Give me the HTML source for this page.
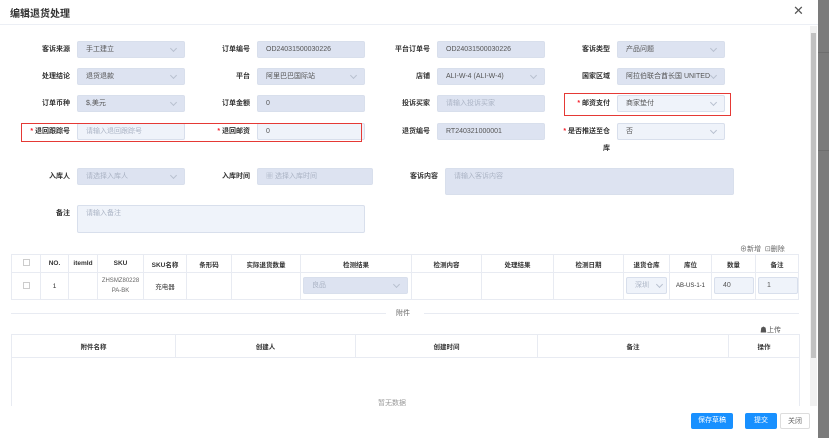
<!DOCTYPE html>
<html><head><meta charset="utf-8"><style>
*{box-sizing:border-box;margin:0;padding:0}
body{width:829px;height:438px;overflow:hidden;background:#fff;font-family:"Liberation Sans","Noto Sans CJK SC",sans-serif;font-size:7px;color:#333;position:relative}
.a{position:absolute}
.lb{position:absolute;text-align:right;font-weight:bold;color:#333;font-size:7px;line-height:17px}
.in{position:absolute;height:17px;border-radius:2px;background:#dde3f1;border:1px solid #d8dfec;font-size:7px;line-height:15px;padding-left:8px;color:#555}
.in.e{background:#eff3fa}
.ph{color:#aab3c4}
.ar{position:absolute;right:8px;top:4px;width:5px;height:5px;border-right:1px solid #b8c0cf;border-bottom:1px solid #b8c0cf;transform:rotate(45deg)}
.st{color:#f5222d}
table{border-collapse:collapse;position:absolute;font-size:6.5px}
td{border:1px solid #e8ebf2;text-align:center;color:#333}
.red{position:absolute;border:1px solid #e53935}
.btn{position:absolute;height:16px;font-size:7px;line-height:16px;text-align:center;border-radius:2px}
</style></head><body>
<div class="a" style="left:0;top:0;width:818px;height:438px;background:#fff"></div>
<div class="a" style="left:818px;top:0;width:11px;height:438px;background:#7b7b7b"></div>
<div class="a" style="left:818px;top:52px;width:11px;height:1px;background:#6e6e6e"></div>
<div class="a" style="left:818px;top:150px;width:11px;height:1px;background:#6e6e6e"></div>
<div class="a" style="left:10px;top:5px;font-size:10px;font-weight:bold;color:#333">编辑退货处理</div>
<div class="a" style="left:793px;top:3px;font-size:13px;color:#555">✕</div>
<div class="a" style="left:0;top:24px;width:818px;height:1px;background:#eceff5"></div>
<div class="a" style="left:810px;top:26px;width:7px;height:380px;background:#f1f1f1"></div>
<div class="a" style="left:811px;top:33px;width:5px;height:325px;background:#c1c1c1"></div>

<div class="lb" style="left:0;width:70px;top:41px">客诉来源</div><div class="in" style="left:77px;top:41px;width:108px">手工建立<i class="ar"></i></div>
<div class="lb" style="left:180px;width:70px;top:41px">订单编号</div><div class="in" style="left:257px;top:41px;width:108px">OD24031500030226</div>
<div class="lb" style="left:360px;width:70px;top:41px">平台订单号</div><div class="in" style="left:437px;top:41px;width:108px">OD24031500030226</div>
<div class="lb" style="left:540px;width:70px;top:41px">客诉类型</div><div class="in" style="left:617px;top:41px;width:108px">产品问题<i class="ar"></i></div>

<div class="lb" style="left:0;width:70px;top:68px">处理结论</div><div class="in" style="left:77px;top:68px;width:108px">退货退款<i class="ar"></i></div>
<div class="lb" style="left:180px;width:70px;top:68px">平台</div><div class="in" style="left:257px;top:68px;width:108px">阿里巴巴国际站<i class="ar"></i></div>
<div class="lb" style="left:360px;width:70px;top:68px">店铺</div><div class="in" style="left:437px;top:68px;width:108px">ALI-W-4 (ALI-W-4)<i class="ar"></i></div>
<div class="lb" style="left:540px;width:70px;top:68px">国家区域</div><div class="in" style="left:617px;top:68px;width:108px;overflow:hidden;white-space:nowrap">阿拉伯联合酋长国 UNITED<i class="ar"></i></div>

<div class="lb" style="left:0;width:70px;top:95px">订单币种</div><div class="in" style="left:77px;top:95px;width:108px">$,美元<i class="ar"></i></div>
<div class="lb" style="left:180px;width:70px;top:95px">订单金额</div><div class="in" style="left:257px;top:95px;width:108px">0</div>
<div class="lb" style="left:360px;width:70px;top:95px">投诉买家</div><div class="in" style="left:437px;top:95px;width:108px"><span class="ph">请输入投诉买家</span></div>
<div class="lb" style="left:540px;width:70px;top:95px"><span class="st">* </span>邮资支付</div><div class="in e" style="left:617px;top:95px;width:108px">商家垫付<i class="ar"></i></div>
<div class="red" style="left:564px;top:93px;width:167px;height:23px"></div>

<div class="lb" style="left:0;width:70px;top:123px"><span class="st">* </span>退回跟踪号</div><div class="in e" style="left:77px;top:123px;width:108px"><span class="ph">请输入退回跟踪号</span></div>
<div class="lb" style="left:180px;width:70px;top:123px"><span class="st">* </span>退回邮资</div><div class="in e" style="left:257px;top:123px;width:108px">0</div>
<div class="red" style="left:21px;top:123px;width:341px;height:19px"></div>
<div class="lb" style="left:360px;width:70px;top:123px">退货编号</div><div class="in" style="left:437px;top:123px;width:108px">RT240321000001</div>
<div class="lb" style="left:540px;width:70px;top:123px"><span class="st">* </span>是否推送至仓</div><div class="in e" style="left:617px;top:123px;width:108px">否<i class="ar"></i></div>
<div class="lb" style="left:590px;width:20px;top:140px">库</div>

<div class="lb" style="left:0;width:70px;top:168px">入库人</div><div class="in" style="left:77px;top:168px;width:108px"><span class="ph">请选择入库人</span><i class="ar"></i></div>
<div class="lb" style="left:180px;width:70px;top:168px">入库时间</div><div class="in" style="left:257px;top:168px;width:116px"><span class="ph">▦ 选择入库时间</span></div>
<div class="lb" style="left:368px;width:70px;top:168px">客诉内容</div><div class="in" style="left:445px;top:168px;width:289px;height:27px"><span class="ph">请输入客诉内容</span></div>

<div class="lb" style="left:0;width:70px;top:205px">备注</div><div class="in e" style="left:77px;top:205px;width:288px;height:28px"><span class="ph">请输入备注</span></div>

<div class="a" style="left:740px;top:244px;color:#666;font-size:7px">⊕新增 &nbsp;⊡删除</div>
<table style="left:11px;top:254px;width:788px">
<tr style="height:18px;font-weight:bold"><td style="width:29px"><span style="display:inline-block;width:7px;height:7px;border:1px solid #ccc"></span></td><td style="width:28px">NO.</td><td style="width:29px">itemId</td><td style="width:46px">SKU</td><td style="width:43px">SKU名称</td><td style="width:45px">条形码</td><td style="width:69px">实际退货数量</td><td style="width:111px">检测结果</td><td style="width:70px">检测内容</td><td style="width:72px">处理结果</td><td style="width:70px">检测日期</td><td style="width:46px">退货仓库</td><td style="width:42px">库位</td><td style="width:44px">数量</td><td>备注</td></tr>
<tr style="height:27px"><td><span style="display:inline-block;width:7px;height:7px;border:1px solid #ccc"></span></td><td>1</td><td></td><td style="font-size:6px;color:#666;line-height:10px">ZHSMZ80228<br>PA-BK</td><td>充电器</td><td></td><td></td><td style="position:relative;text-align:left"><div class="in" style="left:2px;top:4px;width:105px"><span class="ph">良品</span><i class="ar"></i></div></td><td></td><td></td><td></td><td style="position:relative;text-align:left"><div class="in" style="left:2px;top:4px;width:41px;background:#eff3fa"><span class="ph">深圳</span><i class="ar" style="right:4px"></i></div></td><td style="font-size:6px">AB-US-1-1</td><td style="position:relative;text-align:left"><div class="in e" style="left:2px;top:4px;width:40px">40</div></td><td style="position:relative;text-align:left"><div class="in e" style="left:2px;top:4px;width:40px">1</div></td></tr>
</table>
<div class="a" style="left:11px;top:313px;width:375px;height:1px;background:#e8ebf2"></div>
<div class="a" style="left:424px;top:313px;width:375px;height:1px;background:#e8ebf2"></div>
<div class="a" style="left:396px;top:308px;color:#666">附件</div>
<div class="a" style="left:760px;top:325px;color:#555">☗上传</div>
<div class="a" style="left:11px;top:334px;width:789px;height:80px;border:1px solid #e8ebf2"></div>
<table style="left:11px;top:334px;width:789px"><tr style="height:23px;font-weight:bold"><td style="width:164px">附件名称</td><td style="width:180px">创建人</td><td style="width:182px">创建时间</td><td style="width:191px">备注</td><td>操作</td></tr></table>
<div class="a" style="left:378px;top:398px;color:#999;font-size:7px">暂无数据</div>
<div class="a" style="left:0;top:406px;width:818px;height:32px;background:#fff"></div>
<div class="btn" style="left:691px;top:413px;width:42px;background:#1890ff;color:#fff">保存草稿</div>
<div class="btn" style="left:745px;top:413px;width:32px;background:#1890ff;color:#fff">提交</div>
<div class="btn" style="left:780px;top:413px;width:30px;border:1px solid #ddd;color:#666">关闭</div>
</body></html>
